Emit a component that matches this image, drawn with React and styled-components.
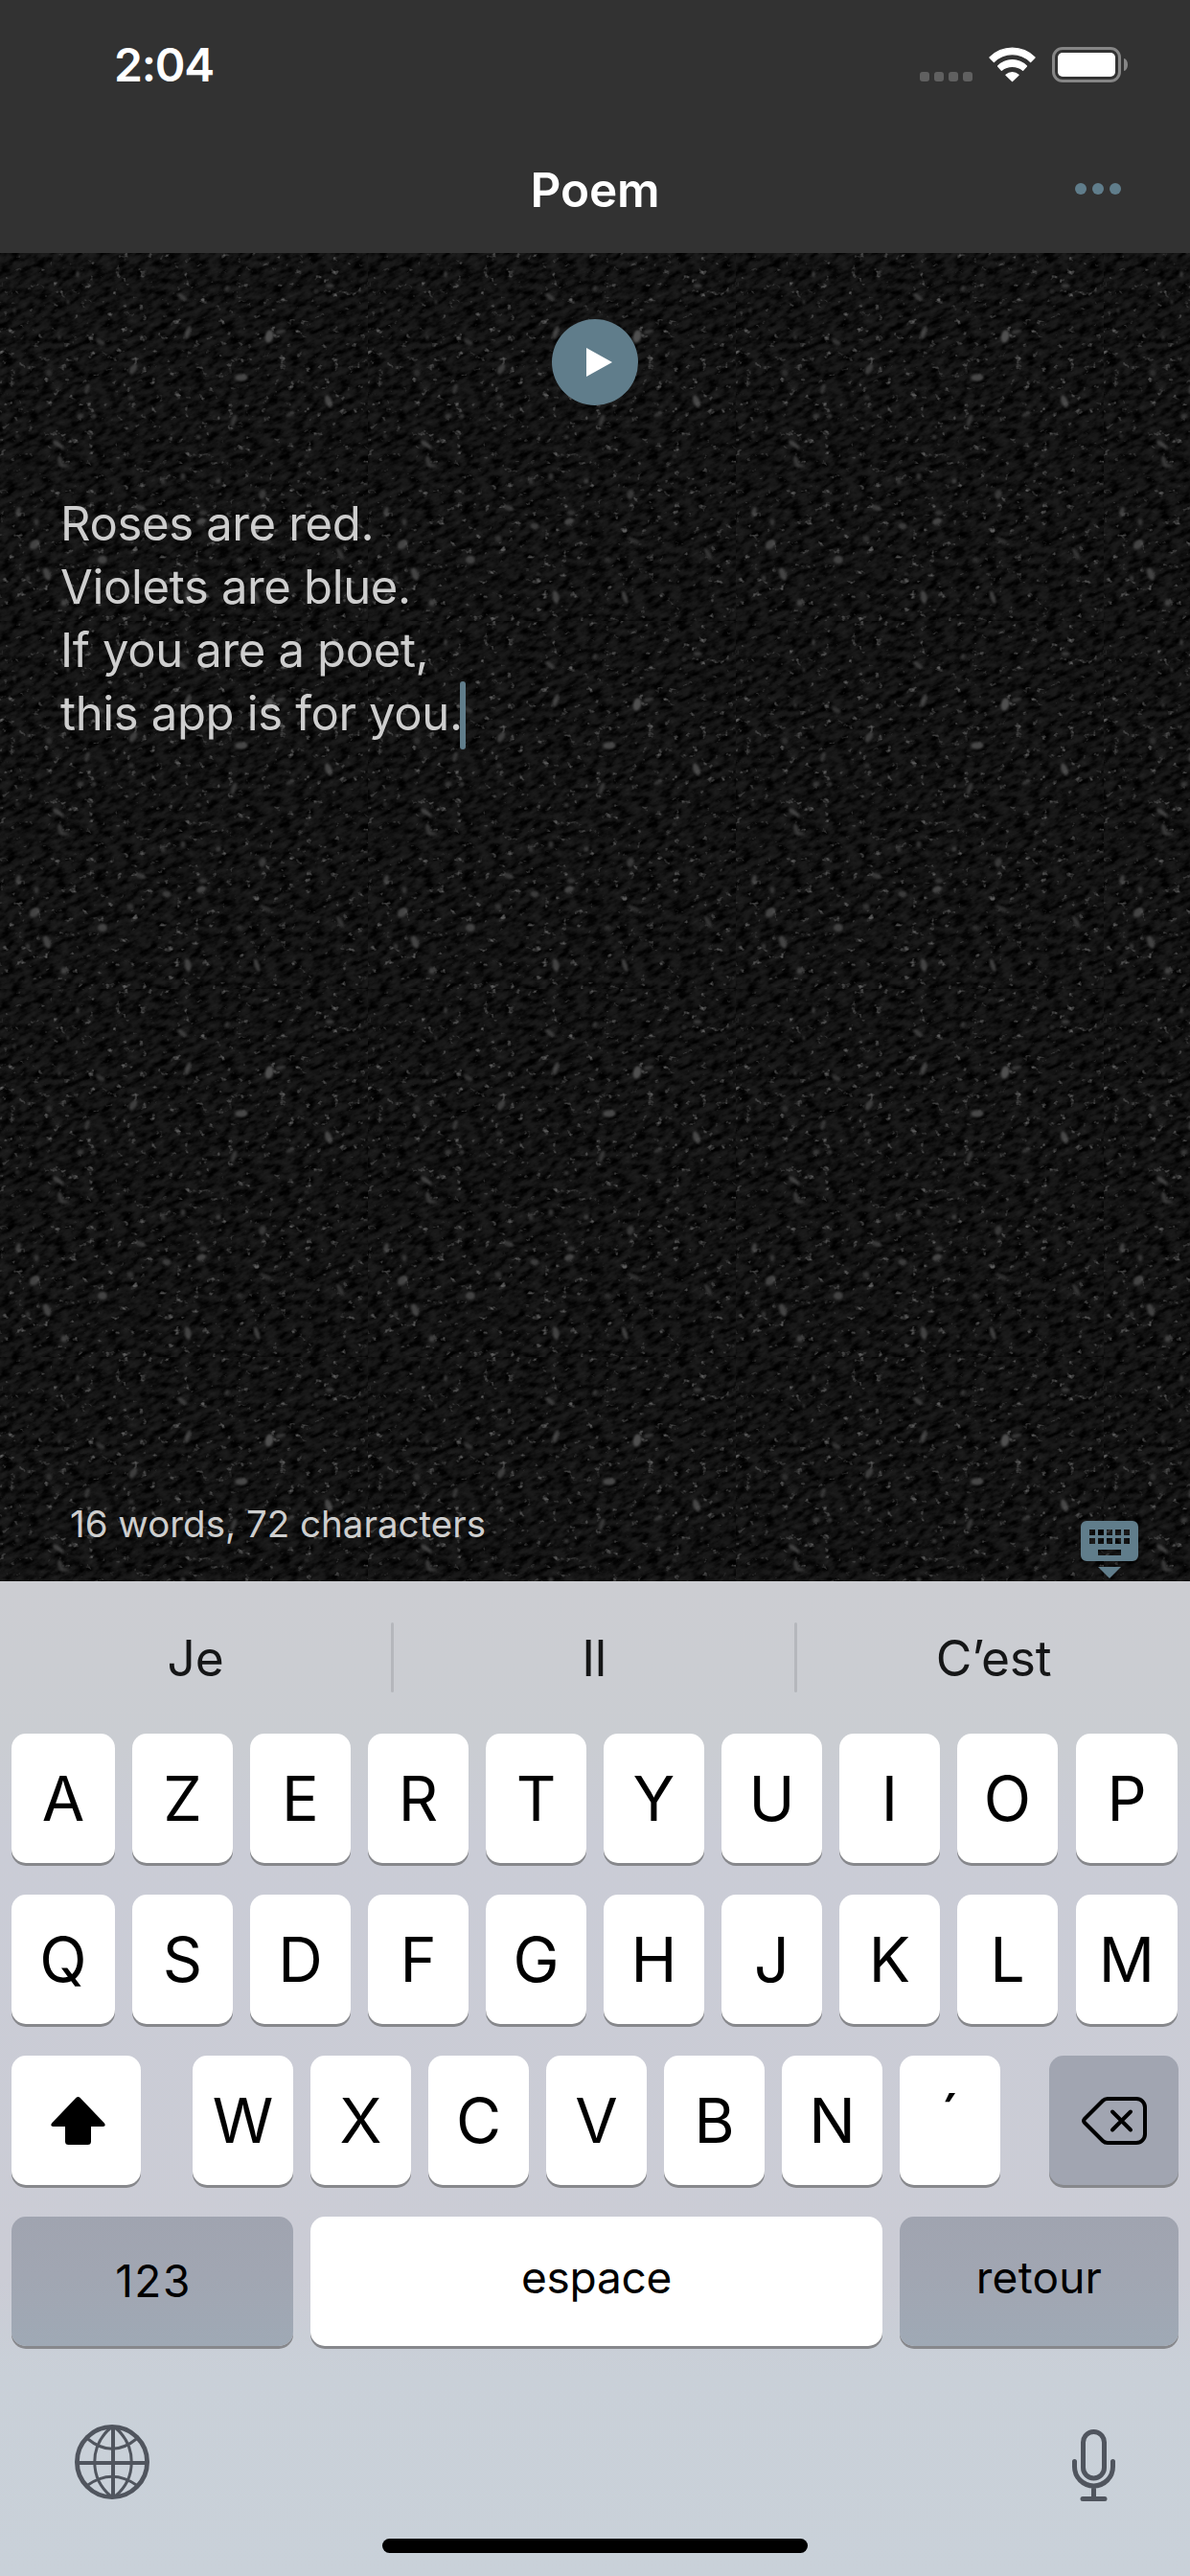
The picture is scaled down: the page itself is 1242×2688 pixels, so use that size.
import React from 'react';
import styled, { createGlobalStyle, css } from 'styled-components';

const ACCENT = '#607d8b';

const GlobalStyle = createGlobalStyle`
  *, *::before, *::after { box-sizing: border-box; }
  body {
    margin: 0;
    background: #cbcdd5;
    font-family: Inter, "Liberation Sans", sans-serif;
    -webkit-font-smoothing: antialiased;
  }
  svg { display: block; flex: none; }
`;

const Screen = styled.div`
  width: 1242px;
  height: 2688px;
  display: flex;
  flex-direction: column;
  overflow: hidden;
`;

/* ---------- header ---------- */

const Header = styled.header`
  height: 264px;
  background: #323232;
  color: #fff;
`;

const StatusBar = styled.div`
  height: 132px;
  padding: 3px 65px 0 119px;
  display: flex;
  align-items: center;
  justify-content: space-between;
`;

const Time = styled.time`
  font-size: 48px;
  line-height: 60px;
  font-weight: 600;
  letter-spacing: -1.2px;
`;

const StatusIcons = styled.div`
  height: 37px;
  display: flex;
  align-items: flex-start;
`;

const Signal = styled.div`
  display: flex;
  gap: 5px;
  margin: 26px 17px 0 0;
`;

const SignalDot = styled.i`
  width: 10px;
  height: 10px;
  border-radius: 3px;
  background: #606060;
`;

const Battery = styled.div`
  width: 72px;
  height: 37px;
  margin-left: 17px;
  padding: 3px;
  border: 3px solid #868686;
  border-radius: 11px;
`;

const BatteryLevel = styled.div`
  height: 100%;
  border-radius: 5px;
  background: #fff;
`;

const BatteryCap = styled.i`
  width: 4px;
  height: 13px;
  margin: 12px 0 0 3px;
  border-radius: 0 4px 4px 0 / 0 6.5px 6.5px 0;
  background: #868686;
`;

const NavBar = styled.nav`
  height: 132px;
  padding: 0 72px;
  display: grid;
  grid-template-columns: 1fr auto 1fr;
  align-items: center;
`;

const Title = styled.h1`
  grid-column: 2;
  margin: 0;
  font-size: 49.5px;
  line-height: 60px;
  font-weight: 600;
  letter-spacing: -0.1px;
`;

const MoreButton = styled.button`
  justify-self: end;
  display: flex;
  gap: 6px;
  margin-top: -2px;
  padding: 0;
  border: 0;
  background: none;
`;

const MoreDot = styled.i`
  width: 12px;
  height: 12px;
  border-radius: 50%;
  background: ${ACCENT};
`;

/* ---------- editor ---------- */

const Editor = styled.main`
  position: relative;
  height: 1386px;
  padding: 69px 54px 3px 62px;
  display: flex;
  flex-direction: column;
  background: #121212;
  color: #cecece;
`;

const Leather = styled.svg`
  position: absolute;
  inset: 0;
`;

const PlayButton = styled.button`
  position: relative;
  width: 90px;
  height: 90px;
  margin: 0 0 0 514px;
  padding: 0 0 0 9px;
  display: flex;
  align-items: center;
  justify-content: center;
  border: 0;
  border-radius: 50%;
  background: ${ACCENT};
`;

const Poem = styled.div`
  position: relative;
  margin-top: 91px;
  padding-left: 1px;
  font-size: 49px;
  line-height: 66px;
  letter-spacing: -0.35px;
`;

const Verse = styled.div`
  height: 66px;
  display: flex;
  white-space: pre;
`;

const Caret = styled.i`
  width: 6px;
  height: 71px;
  margin: -1px 0 0 -3px;
  border-radius: 3px;
  background: ${ACCENT};
`;

const EditorFooter = styled.div`
  position: relative;
  margin-top: auto;
  display: flex;
  align-items: flex-end;
  justify-content: space-between;
`;

const Counter = styled.div`
  padding: 0 0 32px 11px;
  font-size: 38.5px;
  line-height: 50px;
`;

/* ---------- keyboard ---------- */

const Keyboard = styled.section`
  height: 1038px;
  display: flex;
  flex-direction: column;
  background:
    linear-gradient(180deg, #cccdd2 0, #cacdd2 16%, #caccd6 26%, #cbccd5 70%, #c9d0d8 80%, #c9d1d9 100%);
`;

const Suggestions = styled.div`
  height: 159px;
  display: grid;
  grid-template-columns: 408px 3px 418px 3px 410px;
  align-items: center;
`;

const Suggestion = styled.div`
  text-align: center;
  font-size: 51.5px;
  line-height: 64px;
  letter-spacing: -0.3px;
  color: #151617;
`;

const Divider = styled.i`
  height: 73px;
  border-radius: 2px;
  background: #b5b7bc;
`;

const Keys = styled.div`
  padding: 0 12px;
  display: flex;
  flex-direction: column;
  gap: 33px;
`;

const KeyRow = styled.div`
  display: flex;
  gap: 18px;
`;

const Key = styled.button`
  width: ${(p) => p.$w || 105}px;
  height: 135px;
  flex: none;
  margin: 0;
  margin-left: ${(p) => p.$push || 0}px;
  padding: 0 0 ${(p) => p.$lift || 0}px ${(p) => p.$inset || 0}px;
  display: flex;
  align-items: center;
  justify-content: center;
  border: 0;
  border-radius: 15px;
  background: #fff;
  box-shadow: 0 3px 0 #87888c;
  color: #000;
  font-family: inherit;
  font-size: 64.5px;
  line-height: 80px;

  ${(p) =>
    p.$word &&
    css`
      font-size: 46px;
      letter-spacing: ${p.$track || 0}px;
    `}

  ${(p) => p.$tone === 'dark' && css`background: #a1a5b1;`}
  ${(p) =>
    p.$tone === 'fade' &&
    css`background: linear-gradient(180deg, #a0a4b0 0, #a1a6b2 45%, #9fa9b5 100%);`}
`;

const BottomBar = styled.div`
  height: 201px;
  padding: 82px 78px 0;
  display: flex;
  align-items: flex-start;
  justify-content: space-between;
`;

const MicButton = styled.div`
  padding-top: 5px;
`;

const HomeIndicator = styled.div`
  width: 444px;
  height: 15px;
  align-self: center;
  border-radius: 8px;
  background: #000;
`;

/* ---------- drawings ---------- */

// x, y, half width, half height, angle, brightness
const FLECKS = [
  [281, 87, 5, 8, 10, 84], [293, 82, 6, 2, -10, 62], [196, 83, 3, 8, 20, 70], [105, 93, 6, 3, 30, 56],
  [139, 121, 4, 7, 30, 68], [51, 125, 4, 4, 0, 50], [252, 130, 8, 4, 0, 76], [91, 142, 3, 6, 20, 58],
  [137, 151, 4, 3, 0, 50], [343, 155, 4, 8, -20, 76], [303, 168, 6, 3, -30, 54], [244, 175, 3, 8, 20, 58],
  [84, 170, 4, 3, 0, 60], [98, 170, 3, 3, 0, 54], [61, 200, 8, 3, 35, 70], [63, 217, 3, 7, -15, 60],
  [67, 222, 5, 2, 0, 60], [228, 238, 3, 3, 0, 66], [191, 233, 3, 4, 0, 54], [170, 238, 3, 4, 0, 58],
  [274, 252, 4, 6, 20, 62], [19, 270, 3, 6, 15, 66], [38, 281, 3, 4, 0, 54], [36, 304, 5, 7, 45, 72],
  [107, 320, 6, 5, 0, 72], [49, 335, 4, 8, -20, 72], [29, 339, 3, 3, 0, 60], [67, 365, 4, 4, 0, 70],
  [81, 22, 2, 4, 0, 66], [71, 51, 2, 3, 0, 58], [190, 46, 7, 3, 40, 64], [344, 34, 5, 2, 0, 66],
  [237, 37, 3, 4, 20, 56], [212, 271, 5, 3, 0, 54], [355, 314, 3, 8, -30, 56], [148, 266, 6, 2, 30, 52],
  [207, 192, 3, 3, 0, 54], [210, 280, 6, 4, -20, 76], [174, 285, 5, 4, 0, 64], [147, 266, 5, 3, 20, 60],
  [196, 359, 4, 8, -10, 72], [268, 359, 3, 8, -20, 68], [136, 298, 4, 4, 0, 54], [277, 300, 8, 3, 25, 48],
  [250, 320, 4, 3, 0, 50], [18, 191, 3, 2, 0, 52], [232, 363, 2, 2, 0, 64], [178, 335, 2, 2, 0, 58],
  [320, 212, 2, 2, 0, 54], [330, 40, 3, 2, 0, 50], [15, 60, 2, 3, 0, 50], [62, 88, 2, 3, 0, 60],
];

const LeatherTexture = () => (
  <Leather width="1242" height="1386" aria-hidden="true">
    <defs>
      <filter id="grain" x="0" y="0" width="1" height="1" colorInterpolationFilters="sRGB">
        <feTurbulence type="fractalNoise" baseFrequency="0.08 0.16" numOctaves="4" seed="8" />
        <feColorMatrix values="1 0 0 0 0  1 0 0 0 0  1 0 0 0 0  0 0 0 0 1" />
        <feComponentTransfer>
          <feFuncR type="table" tableValues="0 0 0 .018 .045 .072 .094 .105 .12 .14 .16" />
          <feFuncG type="table" tableValues="0 0 0 .018 .045 .072 .094 .105 .12 .14 .16" />
          <feFuncB type="table" tableValues="0 0 0 .018 .045 .072 .094 .105 .12 .14 .16" />
        </feComponentTransfer>
      </filter>
      <filter id="specks" x="0" y="0" width="1" height="1" colorInterpolationFilters="sRGB">
        <feTurbulence type="fractalNoise" baseFrequency="0.11 0.13" numOctaves="3" seed="21" />
        <feColorMatrix values="0 0 0 0 .36  0 0 0 0 .36  0 0 0 0 .36  0 5 0 0 -3.35" />
      </filter>
      <filter id="soft">
        <feGaussianBlur stdDeviation="1" />
      </filter>
      <pattern id="leather" width="384" height="384" patternUnits="userSpaceOnUse">
        <g transform="rotate(-24 192 192)">
          <rect x="-100" y="-100" width="584" height="584" filter="url(#grain)" />
        </g>
        <rect width="384" height="384" filter="url(#specks)" />
        <g filter="url(#soft)">
          {FLECKS.map(([x, y, rx, ry, a, v], i) => (
            <ellipse
              key={i}
              cx={x}
              cy={y}
              rx={rx * 0.85}
              ry={ry * 0.85}
              transform={`rotate(${a} ${x} ${y})`}
              fill={`rgb(${v},${v},${v})`}
              opacity="0.9"
            />
          ))}
        </g>
      </pattern>
    </defs>
    <rect width="1242" height="1386" fill="url(#leather)" />
  </Leather>
);

const WifiIcon = () => (
  <svg width="49" height="37" viewBox="0 0 49 37" fill="#fff" stroke="#fff" strokeWidth="1.4" strokeLinejoin="round">
    <path d="M1 11A33 33 0 0 1 48 11L43.6 15.5A27 27 0 0 0 5.4 15.5Z" />
    <path d="M9.6 20A20.5 20.5 0 0 1 39.4 20L35.6 24.2A18 18 0 0 0 13.4 24.2Z" />
    <path d="M18 29.2A10 10 0 0 1 31 29.2L24.5 35.4Z" />
  </svg>
);

const PlayIcon = () => (
  <svg width="27" height="30" viewBox="0 0 27 30">
    <path d="M0 0L27 15L0 30Z" fill="#fff" />
  </svg>
);

const HideKeyboardIcon = () => (
  <svg width="60" height="60" viewBox="0 0 60 60" fill={ACCENT}>
    <path
      fillRule="evenodd"
      d="M6 0H54A6 6 0 0 1 60 6V36A6 6 0 0 1 54 42H6A6 6 0 0 1 0 36V6A6 6 0 0 1 6 0ZM9 9V15H15V9ZM18 9V15H24V9ZM27 9V15H33V9ZM36 9V15H42V9ZM45 9V15H51V9ZM9 18V24H15V18ZM18 18V24H24V18ZM27 18V24H33V18ZM36 18V24H42V18ZM45 18V24H51V18ZM18 30V36H42V30Z"
    />
    <path d="M18 48H42L30 60Z" />
  </svg>
);

const ShiftIcon = () => (
  <svg width="57" height="50" viewBox="0 0 57 50">
    <path d="M26.6 .8Q28.5 -.8 30.4 .8L56 27.6Q58 31 54.5 31H42V46.5Q42 50 38.5 50H18.5Q15 50 15 46.5V31H2.5Q-1 31 1 27.6Z" />
  </svg>
);

const DeleteIcon = () => (
  <svg width="68" height="50" viewBox="0 0 68 50" fill="none" stroke="#000" strokeWidth="4" strokeLinecap="round">
    <path d="M27 2H57A9 9 0 0 1 66 11V39A9 9 0 0 1 57 48H27Q24 48 22 46L3 27Q1 25 3 23L22 4Q24 2 27 2Z" />
    <path d="M32 15.5L51 34.5M51 15.5L32 34.5" />
  </svg>
);

const GlobeIcon = () => (
  <svg width="78" height="78" viewBox="0 0 78 78" fill="none" stroke="#50555e">
    <circle cx="39" cy="39" r="36.6" strokeWidth="4.8" />
    <path d="M40 2V76M2 40H76" strokeWidth="4" />
    <path d="M38 3C15 22 15 56 38 75M42 3C65 22 65 56 42 75M13 14.5Q39 36 65 14.5M13 63.5Q39 45 65 63.5" strokeWidth="3" />
  </svg>
);

const MicIcon = () => (
  <svg width="45" height="75" viewBox="0 0 45 75" fill="none" stroke="#50555e" strokeWidth="5" strokeLinecap="round">
    <rect x="11.5" y="2.5" width="22" height="48.5" rx="11" />
    <path d="M2.5 33.5V39A20 20 0 0 0 42.5 39V33.5M22.5 60V72M11 72.5H34" />
  </svg>
);

/* ---------- screen ---------- */

const VERSES = ['Roses are red.', 'Violets are blue.', 'If you are a poet,', 'this app is for you.'];
const WIDE_ROWS = ['AZERTYUIOP', 'QSDFGHJKLM'];

const LetterRow = ({ letters }) => (
  <KeyRow>
    {[...letters].map((letter, i) => (
      <Key key={letter} $w={i === 0 ? 108 : i === 9 ? 106 : 105} $push={i === 9 ? 1 : 0}>
        {letter}
      </Key>
    ))}
  </KeyRow>
);

export default function App() {
  return (
    <>
      <GlobalStyle />
      <Screen>
        <Header>
          <StatusBar>
            <Time>2:04</Time>
            <StatusIcons>
              <Signal>
                {[0, 1, 2, 3].map((n) => (
                  <SignalDot key={n} />
                ))}
              </Signal>
              <WifiIcon />
              <Battery>
                <BatteryLevel />
              </Battery>
              <BatteryCap />
            </StatusIcons>
          </StatusBar>
          <NavBar>
            <Title>Poem</Title>
            <MoreButton aria-label="More">
              <MoreDot />
              <MoreDot />
              <MoreDot />
            </MoreButton>
          </NavBar>
        </Header>

        <Editor>
          <LeatherTexture />
          <PlayButton aria-label="Play">
            <PlayIcon />
          </PlayButton>
          <Poem>
            {VERSES.map((verse, i) => (
              <Verse key={verse}>
                {verse}
                {i === VERSES.length - 1 && <Caret />}
              </Verse>
            ))}
          </Poem>
          <EditorFooter>
            <Counter>16 words, 72 characters</Counter>
            <HideKeyboardIcon />
          </EditorFooter>
        </Editor>

        <Keyboard>
          <Suggestions>
            <Suggestion>Je</Suggestion>
            <Divider />
            <Suggestion>Il</Suggestion>
            <Divider />
            <Suggestion>C’est</Suggestion>
          </Suggestions>
          <Keys>
            {WIDE_ROWS.map((letters) => (
              <LetterRow key={letters} letters={letters} />
            ))}
            <KeyRow>
              <Key $w={135} $inset={4} aria-label="Shift">
                <ShiftIcon />
              </Key>
              {[...'WXCVBN'].map((letter, i) => (
                <Key key={letter} $push={i === 0 ? 36 : 0}>
                  {letter}
                </Key>
              ))}
              <Key $lift={6}>´</Key>
              <Key $w={135} $push={33} $tone="dark" aria-label="Delete">
                <DeleteIcon />
              </Key>
            </KeyRow>
            <KeyRow>
              <Key $w={294} $tone="fade" $word $track={1.5} $lift={2} $inset={2}>
                123
              </Key>
              <Key $w={597} $word $track={-0.3} $lift={10}>
                espace
              </Key>
              <Key $w={291} $tone="fade" $word $track={0.2} $lift={10}>
                retour
              </Key>
            </KeyRow>
          </Keys>
          <BottomBar>
            <GlobeIcon />
            <MicButton>
              <MicIcon />
            </MicButton>
          </BottomBar>
          <HomeIndicator />
        </Keyboard>
      </Screen>
    </>
  );
}
